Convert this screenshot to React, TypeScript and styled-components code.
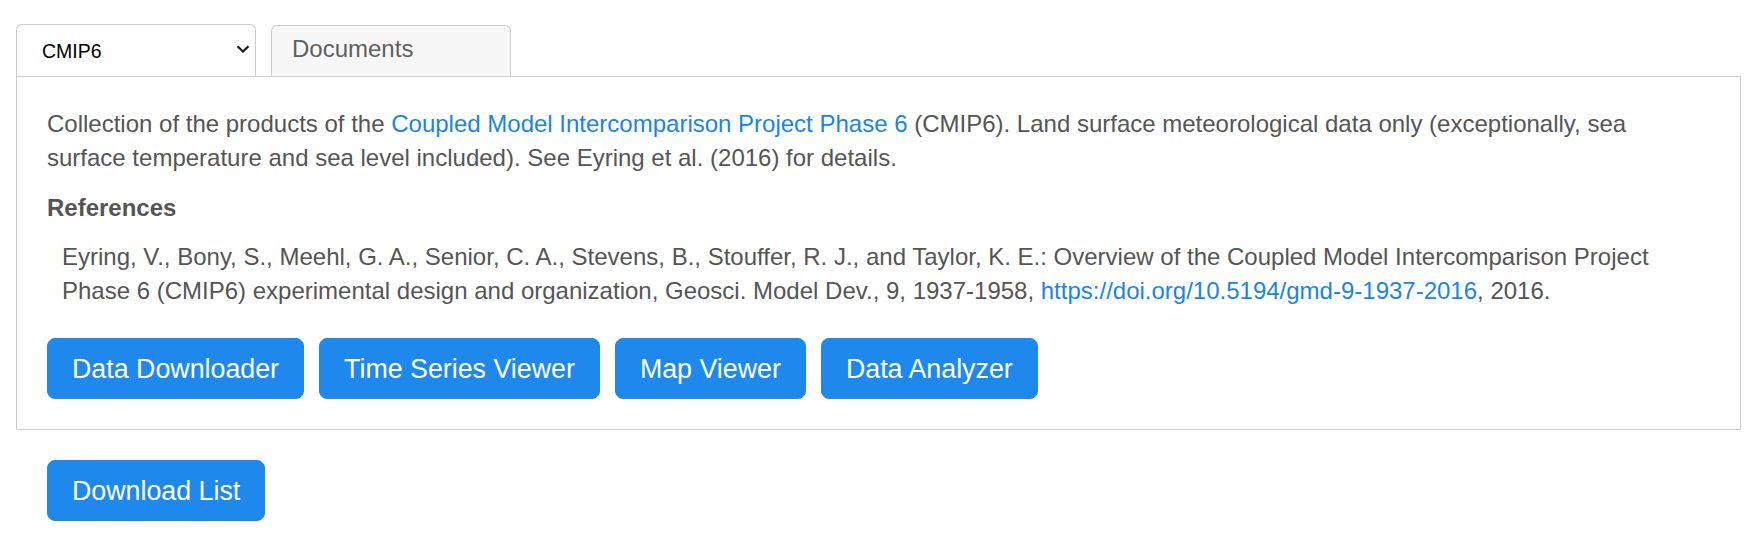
import React from 'react';
import styled, { createGlobalStyle } from 'styled-components';

const GlobalStyle = createGlobalStyle`
  html, body {
    margin: 0;
    padding: 0;
    background: #fff;
  }
  body {
    font-family: 'Liberation Sans', Arial, sans-serif;
    color: #555;
  }
`;

const Page = styled.div`
  padding: 24px 19px 0 16px;
`;

const TabRow = styled.div`
  display: flex;
  align-items: flex-end;
  gap: 15px;
`;

const SelectWrap = styled.div`
  position: relative;
  width: 240px;
`;

const DatasetSelect = styled.select`
  appearance: none;
  -webkit-appearance: none;
  display: block;
  width: 100%;
  height: 52px;
  margin: 0;
  padding: 0 0 0 25px;
  font-family: 'Liberation Sans', Arial, sans-serif;
  font-size: 19.5px;
  color: #000;
  background: #fff;
  border: 1px solid #ccc;
  border-bottom: none;
  border-radius: 6px 6px 0 0;
  outline: none;
`;

const Chevron = styled.svg`
  position: absolute;
  right: 6px;
  top: 21px;
  pointer-events: none;
`;

const Tab = styled.div`
  box-sizing: border-box;
  width: 240px;
  height: 51px;
  padding: 6px 20px 0;
  font-size: 24px;
  line-height: 34.3px;
  color: #5f5f5f;
  background: #f7f7f7;
  border: 1px solid #ccc;
  border-bottom: none;
  border-radius: 6px 6px 0 0;
`;

const Panel = styled.div`
  border: 1px solid #ccc;
  padding: 30px 32px 30px 30px;
  font-size: 24px;
  line-height: 34.3px;
  color: #555;
`;

const Paragraph = styled.p`
  margin: 0 0 15px;
`;

const Heading = styled.div`
  font-weight: bold;
  margin-bottom: 15px;
`;

const RefList = styled.div`
  padding-left: 15px;
`;

const Link = styled.a`
  color: #1a84e8;
  text-decoration: none;
`;

const ButtonRow = styled.div<{ $top?: number; $left?: number }>`
  display: flex;
  gap: 15px;
  margin-top: ${p => p.$top ?? 0}px;
  margin-left: ${p => p.$left ?? 0}px;
`;

const Button = styled.button`
  font-family: 'Liberation Sans', Arial, sans-serif;
  font-size: 26.8px;
  line-height: 36px;
  padding: 11.5px 24px;
  color: #fff;
  background: #1e88ec;
  border: 1px solid #1e88ec;
  border-radius: 8px;
  cursor: pointer;
  white-space: nowrap;
`;

export default function App() {
  return (
    <Page>
      <GlobalStyle />
      <TabRow>
        <SelectWrap>
          <DatasetSelect defaultValue="CMIP6">
            <option value="CMIP6">CMIP6</option>
            <option value="CMIP5">CMIP5</option>
          </DatasetSelect>
          <Chevron width="14" height="8" viewBox="0 0 14 8">
            <polyline points="1.5,1.2 7,6.5 12.5,1.2" fill="none" stroke="#1a1a1a" strokeWidth="2.2" />
          </Chevron>
        </SelectWrap>
        <Tab>Documents</Tab>
      </TabRow>
      <Panel>
        <Paragraph>
          Collection of the products of the{' '}
          <Link href="#">Coupled Model Intercomparison Project Phase 6</Link> (CMIP6). Land surface
          meteorological data only (exceptionally, sea surface temperature and sea level included). See
          Eyring et al. (2016) for details.
        </Paragraph>
        <Heading>References</Heading>
        <RefList>
          Eyring, V., Bony, S., Meehl, G. A., Senior, C. A., Stevens, B., Stouffer, R. J., and Taylor, K. E.:
          Overview of the Coupled Model Intercomparison Project Phase 6 (CMIP6) experimental design and
          organization, Geosci. Model Dev., 9, 1937-1958,{' '}
          <Link href="#">https://doi.org/10.5194/gmd-9-1937-2016</Link>, 2016.
        </RefList>
        <ButtonRow $top={30}>
          <Button>Data Downloader</Button>
          <Button>Time Series Viewer</Button>
          <Button>Map Viewer</Button>
          <Button>Data Analyzer</Button>
        </ButtonRow>
      </Panel>
      <ButtonRow $top={30} $left={31}>
        <Button>Download List</Button>
      </ButtonRow>
    </Page>
  );
}
